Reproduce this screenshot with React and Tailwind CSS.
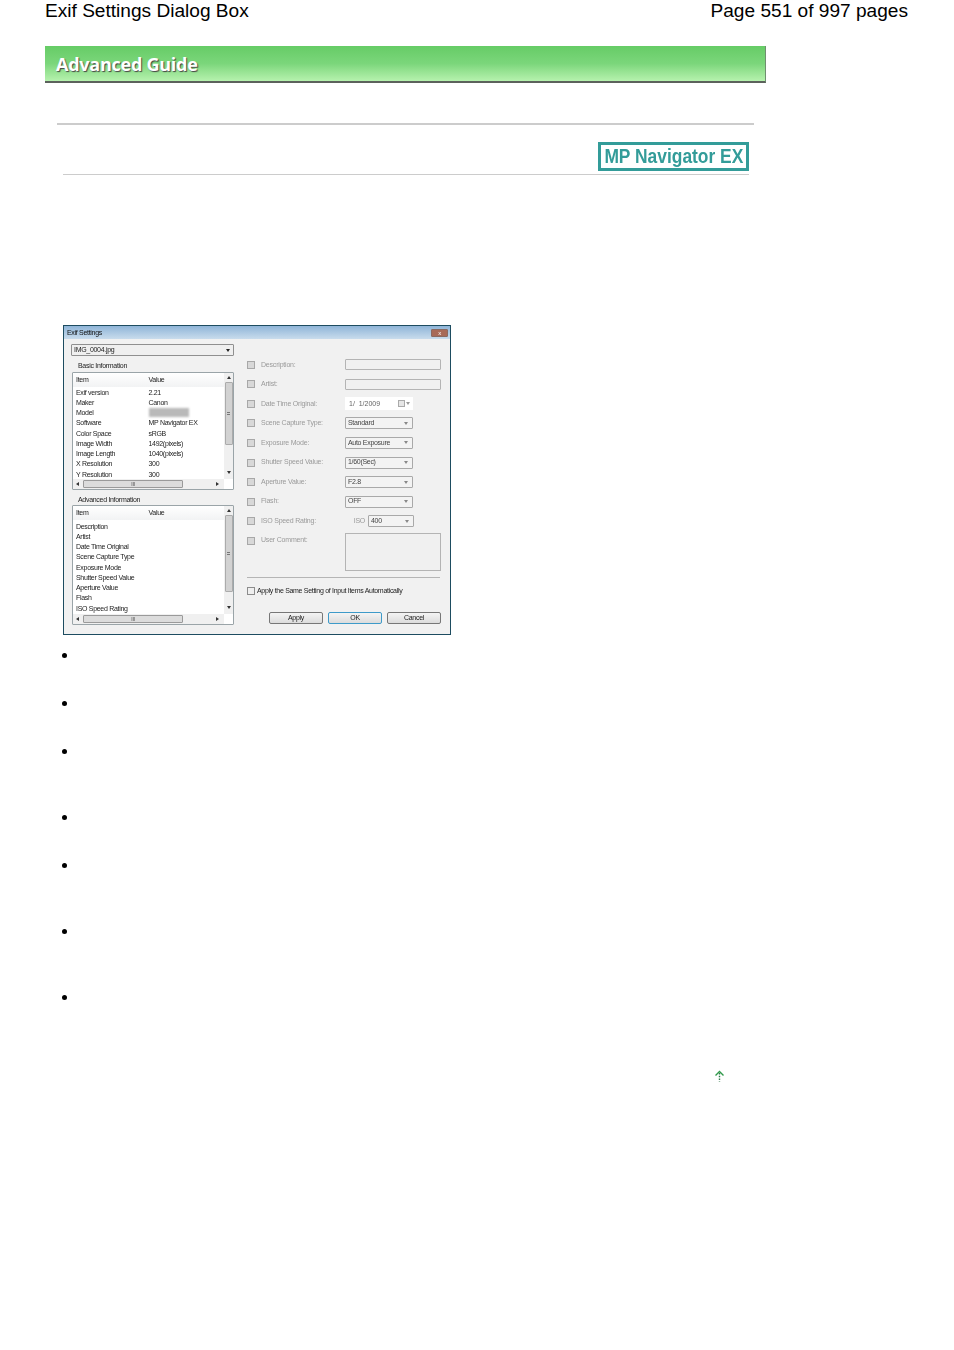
import React from 'react';

const basicRows = [
  ['Exif version', '2.21'],
  ['Maker', 'Canon'],
  ['Model', ''],
  ['Software', 'MP Navigator EX'],
  ['Color Space', 'sRGB'],
  ['Image Width', '1492(pixels)'],
  ['Image Length', '1040(pixels)'],
  ['X Resolution', '300'],
  ['Y Resolution', '300'],
];

const advancedRows = [
  'Description',
  'Artist',
  'Date Time Original',
  'Scene Capture Type',
  'Exposure Mode',
  'Shutter Speed Value',
  'Aperture Value',
  'Flash',
  'ISO Speed Rating',
].map((name) => [name, '']);

const bulletGaps = ['h-[48px]', 'h-[48px]', 'h-[66px]', 'h-[48px]', 'h-[66px]', 'h-[66px]', 'h-[48px]'];

function Caret({ className = 'border-t-[#555]' }) {
  return <span className={`block w-0 h-0 border-x-[2.5px] border-x-transparent border-t-[3px] ${className}`}></span>;
}

function ListBox({ rows, height, bodyTop, thumb }) {
  return (
    <div className={`relative w-[162px] ml-px border border-[#9aa4a8] rounded-[1px] bg-white flex ${height}`}>
      <div className="flex-1 min-w-0 flex flex-col">
        <div className="h-[14px] shrink-0 flex items-center pl-[3px] bg-gradient-to-b from-white to-[#f2f3f4] text-[7px] text-[#222]">
          <span className="w-[72.5px]">Item</span>
          <span>Value</span>
        </div>
        <div className={`flex flex-col ${bodyTop}`}>
          {rows.map(([name, value]) => (
            <div key={name} className="h-[10.25px] flex items-center pl-[3px] text-[7px] leading-none text-[#222] whitespace-nowrap">
              <span className="w-[72.5px]">{name}</span>
              {name === 'Model' ? <span className="w-[40px] h-[9px] bg-[#b9b9b9] blur-[1px]"></span> : <span>{value}</span>}
            </div>
          ))}
        </div>
        <div className="mt-auto h-[10px] shrink-0 flex items-center bg-[#f0f0f0] pl-[3px] pr-[5px]">
          <span className="block w-0 h-0 border-y-[2px] border-y-transparent border-r-[3px] border-r-[#333]"></span>
          <span className="ml-[4px] mr-auto w-[100px] h-[8px] bg-[#dcdcdc] border border-[#9a9a9a] rounded-[1px] text-[5px] leading-[6px] text-center text-[#444]">III</span>
          <span className="block w-0 h-0 border-y-[2px] border-y-transparent border-l-[3px] border-l-[#333]"></span>
        </div>
      </div>
      <div className="w-[9px] mb-[10px] flex flex-col items-center bg-[#f0f0f0] pt-[3px] pb-[5px]">
        <span className="block w-0 h-0 border-x-[2px] border-x-transparent border-b-[3px] border-b-[#333]"></span>
        <span className={`mt-[3px] w-[8px] bg-[#d2d2d2] border border-[#ababab] rounded-[1px] flex items-center justify-center ${thumb}`}>
          <span className="block w-[3px] h-[3px] border-y border-[#777]"></span>
        </span>
        <span className="mt-auto"><Caret className="border-t-[#333]" /></span>
      </div>
    </div>
  );
}

function Check() {
  return <span className="block shrink-0 w-[8px] h-[8px] border border-[#a8a8a8] bg-[#d8d8d8]"></span>;
}

function Combo({ value, width = 'w-[68px]' }) {
  return (
    <div className={`h-[12px] ${width} bg-[#f3f3f3] border border-[#a9a9a9] rounded-[1px] flex items-center justify-between pl-[2px] pr-[4px] text-[7px] text-[#444]`}>
      <span>{value}</span>
      <Caret className="border-t-[#888]" />
    </div>
  );
}

function Field({ label, children }) {
  return (
    <div className="h-[19.55px] flex items-center">
      <Check />
      <span className="w-[90px] pl-[6px] text-[7px] tracking-[-0.2px] text-[#9a9a9a] whitespace-nowrap">{label}</span>
      {children}
    </div>
  );
}

function EmptyInput() {
  return <div className="w-[96px] h-[11px] bg-[#f0f0f0] border border-[#b4b4b4] rounded-[1px]"></div>;
}

function DialogButton({ label, primary }) {
  return (
    <div className={`w-[54px] h-[12px] rounded-[2px] border bg-gradient-to-b from-[#f4f4f4] to-[#dcdcdc] flex items-center justify-center text-[7px] text-[#222] ${primary ? 'border-[#3d9ac9]' : 'border-[#777]'}`}>
      {label}
    </div>
  );
}

function ExifDialog() {
  return (
    <div className="ml-[63px] w-[388px] h-[310px] border border-[#1d4c60] bg-[#f1f1f1] flex flex-col tracking-[-0.3px] blur-[0.45px]" style={{ fontFamily: '"Liberation Sans", Arial, sans-serif' }}>
      <div className="h-[13px] shrink-0 flex items-center justify-between pl-[3px] pr-[2px] pt-[1px] bg-gradient-to-b from-[#8fb5d8] to-[#c9dcec] text-[7px] text-[#111]">
        <span>Exif Settings</span>
        <span className="w-[17px] h-[8px] rounded-[1px] bg-[#a86a58] border border-[#8a6a62] flex items-center justify-center text-white text-[6px] leading-none">x</span>
      </div>
      <div className="flex-1 flex">
        <div className="w-[171px] shrink-0 pl-[7px] pt-[5px]">
          <div className="h-[12px] w-[163px] bg-[#efefef] border border-[#8f8f8f] rounded-[1px] flex items-center justify-between pl-[2px] pr-[3px] text-[7px] text-[#222]">
            <span>IMG_0004.jpg</span>
            <Caret className="border-t-[#222]" />
          </div>
          <div className="h-[16px] pl-[7px] pt-[5px] text-[7px] leading-[10px] text-[#222]">Basic Information</div>
          <ListBox rows={basicRows} height="h-[118px]" bodyTop="pt-0" thumb="h-[63px]" />
          <div className="h-[15px] pl-[7px] pt-[5px] text-[7px] leading-[10px] text-[#222]">Advanced Information</div>
          <ListBox rows={advancedRows} height="h-[120px]" bodyTop="pt-[1px]" thumb="h-[77px]" />
        </div>
        <div className="flex-1 pl-[12px] pr-[9px] pt-[16px]">
          <Field label="Description:"><EmptyInput /></Field>
          <Field label="Artist:"><EmptyInput /></Field>
          <Field label="Date Time Original:">
            <div className="w-[68px] h-[13px] bg-white flex items-center justify-between pl-[4px] pr-[3px] text-[7px] tracking-normal text-[#666]">
              <span className="whitespace-pre">1/  1/2009</span>
              <span className="flex items-center gap-px">
                <span className="w-[7px] h-[7px] border border-[#aaa] bg-[#e6e6e6]"></span>
                <Caret className="border-t-[#999]" />
              </span>
            </div>
          </Field>
          <Field label="Scene Capture Type:"><Combo value="Standard" /></Field>
          <Field label="Exposure Mode:"><Combo value="Auto Exposure" /></Field>
          <Field label="Shutter Speed Value:"><Combo value="1/60(Sec)" /></Field>
          <Field label="Aperture Value:"><Combo value="F2.8" /></Field>
          <Field label="Flash:"><Combo value="OFF" /></Field>
          <Field label="ISO Speed Rating:">
            <span className="w-[23px] text-right pr-[3px] text-[7px] text-[#9a9a9a]">ISO</span>
            <Combo value="400" width="w-[46px]" />
          </Field>
          <div className="flex h-[46px] items-start">
            <div className="h-[19.55px] flex items-center">
              <Check />
              <span className="w-[90px] pl-[6px] text-[7px] tracking-[-0.2px] text-[#9a9a9a]">User Comment:</span>
            </div>
            <div className="w-[96px] h-[38px] mt-[2px] bg-[#f0f0f0] border border-[#b4b4b4]"></div>
          </div>
          <div className="h-px w-[193px] bg-[#b5b5b5]"></div>
          <div className="flex items-center mt-[8px] h-[10px] text-[7px] text-[#222] whitespace-nowrap">
            <span className="block shrink-0 w-[8px] h-[8px] border border-[#8c8c8c] bg-[#efefef] mr-[2px]"></span>
            Apply the Same Setting of Input Items Automatically
          </div>
          <div className="flex justify-end gap-[5px] mt-[16px] w-[194px]">
            <DialogButton label="Apply" />
            <DialogButton label="OK" primary />
            <DialogButton label="Cancel" />
          </div>
        </div>
      </div>
    </div>
  );
}

export default function App() {
  return (
    <div className="w-[954px] h-[1350px] bg-white overflow-hidden" style={{ fontFamily: '"Liberation Sans", Arial, sans-serif' }}>
      <div className="flex justify-between pl-[45px] pr-[46px] h-[22px] text-[19.1px] leading-[21px] text-black whitespace-nowrap">
        <span>Exif Settings Dialog Box</span>
        <span>Page 551 of 997 pages</span>
      </div>

      {/* Green title bar */}
      <div className="ml-[45px] mt-[24px] w-[721px] h-[37px] border-b-2 border-r border-b-[#5c625c] border-r-[#6f8f6f] bg-gradient-to-b from-[#66cc66] via-[#7bd67b] to-[#b6f2ae] flex items-center pl-[11px] pt-[1px]">
        <span className="text-[18px] font-bold text-white tracking-[-0.25px] [text-shadow:1px_1px_1px_#444]" style={{ fontFamily: '"Open Sans", sans-serif' }}>Advanced Guide</span>
      </div>

      <div className="ml-[57px] mt-[40px] w-[697px] h-[2px] bg-[#cccccc]"></div>

      <div className="ml-[63px] mt-[17px] w-[686px] flex justify-end">
        <div className="w-[151px] h-[29px] border-[3px] border-[#339c99] flex items-center justify-center pb-[2px] text-[20px] font-bold text-[#339c99] whitespace-nowrap">
          <span className="scale-x-[0.87]">MP Navigator EX</span>
        </div>
      </div>
      <div className="ml-[63px] mt-[3px] w-[686px] h-px bg-[#cccccc]"></div>

      <div className="mt-[150px]">
        <ExifDialog />
      </div>

      <div className="ml-[62px] mt-[18px] flex flex-col">
        {bulletGaps.map((gap, i) => (
          <div key={i} className={gap}>
            <span className="block w-[5px] h-[5px] rounded-full bg-black"></span>
          </div>
        ))}
      </div>

      <div className="ml-[714px] mt-[27px] w-[11px] h-[13px]">
        <svg width="11" height="13" viewBox="0 0 11 13" fill="none">
          <path d="M1.5 5.5 L5.5 1.5 L9.5 5.5" stroke="#2f9a4a" strokeWidth="1.4" />
          <path d="M5.5 3 V12" stroke="#2f7a4a" strokeWidth="1.4" strokeDasharray="1.4 1.4" />
        </svg>
      </div>
    </div>
  );
}
